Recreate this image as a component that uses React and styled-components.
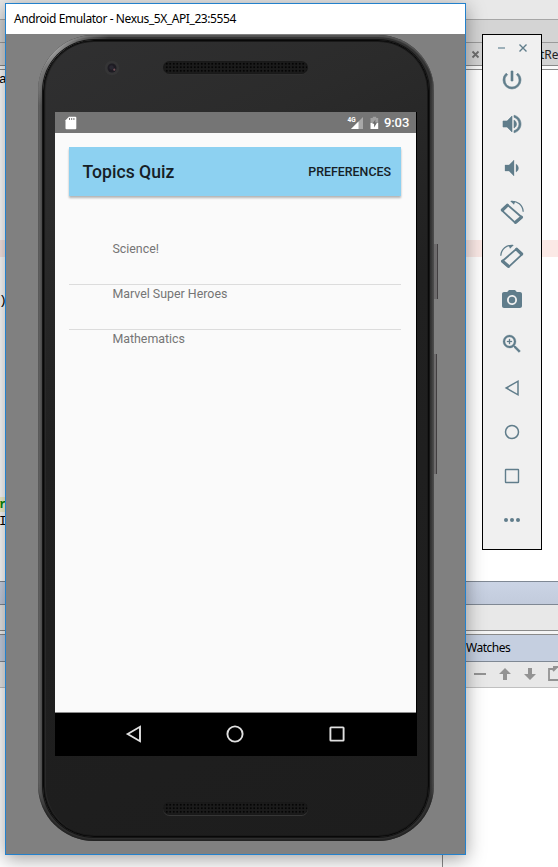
import React from "react";
import styled, { createGlobalStyle, css } from "styled-components";
import { MdPowerSettingsNew, MdVolumeUp, MdVolumeDown, MdCameraAlt, MdZoomIn } from "react-icons/md";

const Global = createGlobalStyle`
  *, *::before, *::after { box-sizing: border-box; }
  html, body { margin: 0; padding: 0; overflow: hidden; }
`;

const ui = css`
  font-family: "Noto Sans", "Open Sans", sans-serif;
  font-size: 12px;
  white-space: nowrap;
`;

const Desktop = styled.main`
  position: relative;
  width: 558px;
  height: 867px;
  overflow: hidden;
  background: #fff;
`;

/* ---------- IDE behind the emulator ---------- */
const Ide = styled.div`
  display: flex;
  flex-direction: column;
  height: 100%;
`;
const Strip = styled.div`
  ${ui}
  flex: none;
  display: flex;
  align-items: center;
  height: ${(p) => p.$h}px;
  background: ${(p) => p.$bg};
  border-bottom: 1px solid ${(p) => p.$line || "#8a8a8a"};
`;
const TabClose = styled.svg`
  flex: none;
  width: 9px;
  height: 9px;
  margin-left: 471px;
  margin-top: 1px;
`;
const TabName = styled.span`
  flex: none;
  margin-left: 60px;
  color: #222;
`;
const Editor = styled.div`
  flex: none;
  display: flex;
  flex-direction: column;
  height: 512px;
  padding-top: 1px;
  border-bottom: 1px solid #7f8894;
  font: 13px/17px "Liberation Mono", monospace;
`;
const CodeLine = styled.div`
  flex: none;
  height: 17px;
  margin-top: ${(p) => p.$gap || 0}px;
  text-indent: -1px;
  background: ${(p) => (p.$breakpoint ? "#fbe9e6" : "transparent")};
  color: ${(p) => p.$color || "#000"};
`;
const Marked = styled.span`
  background: #f8f6d0;
  font-weight: bold;
`;
const WatchTitle = styled.span`
  flex: none;
  margin-left: 466px;
  margin-top: -2px;
  color: #000;
  letter-spacing: -0.5px;
`;
const WatchTools = styled.svg`
  flex: none;
  width: 84px;
  height: 24px;
  margin-left: 474px;
  margin-top: -1px;
`;
const WatchBody = styled.div`
  flex: 1;
  width: 443px;
  border-right: 1px solid #8a8a8a;
`;

/* ---------- Emulator window ---------- */
const EmulatorWindow = styled.section`
  position: absolute;
  left: 5px;
  top: 3px;
  width: 461px;
  height: 852px;
  display: flex;
  flex-direction: column;
  border: 1px solid #2381cc;
  background: #808080;
  box-shadow: 0 4px 18px rgba(0, 0, 0, 0.38);
`;
const TitleBar = styled.header`
  ${ui}
  flex: none;
  height: 30px;
  padding-left: 8px;
  line-height: 30px;
  background: #fff;
  color: #000;
  letter-spacing: -0.42px;
`;
const Stage = styled.div`
  flex: 1;
  padding: 1px 0 0 32px;
`;
const Phone = styled.div`
  position: relative;
  width: 396px;
  height: 806px;
  padding: 5px 5px 4px 5px;
  border-radius: 56px;
  background: linear-gradient(90deg, #777 0, #5a5a5a 2px, #484848 4px, #333 8px, #333 385px, #2e2e2e 392px, #3c3c3c 394px, #636363 396px);
  box-shadow: inset 0 2px 1px #555, inset 0 -2px 2px #222;

  &::before {
    content: "";
    position: absolute;
    inset: 0;
    border-radius: inherit;
    background: radial-gradient(circle at 14px 14px, rgba(190, 190, 190, 0.75), transparent 58px);
  }
`;
const Face = styled.div`
  position: relative;
  height: 100%;
  display: flex;
  flex-direction: column;
  align-items: flex-start;
  padding-left: 11px;
  border: 1px solid #080808;
  border-radius: 51px;
  background: linear-gradient(155deg, #303031 0, #2b2b2b 18%, #202020 42%, #1d1d1d 100%);
  box-shadow: 0 0 0 1px #151515, inset 0 0 0 1px #191919, inset 2px 0 0 #292929;
`;
const Forehead = styled.div`
  flex: none;
  display: flex;
  align-items: flex-start;
  height: 71px;
  padding-top: 20px;
`;
const Camera = styled.svg`
  width: 16px;
  height: 16px;
  margin: -1px 0 0 49px;
`;
const Speaker = styled.div`
  width: 145px;
  height: 13px;
  margin-left: ${(p) => p.$x}px;
  border-radius: 7px;
  background-color: #1b1b1b;
  background-image: radial-gradient(circle, #050505 0.8px, transparent 1.4px);
  background-size: 3.5px 3.5px;
  background-position: 2px 1px;
  box-shadow: 0 1px 0 ${(p) => p.$rim}, inset 0 0 0 1px #191919;
`;
const Chin = styled.div`
  flex: 1;
  padding-top: 46px;
`;
const SideKey = styled.i`
  position: absolute;
  left: ${(p) => p.$x}px;
  top: ${(p) => p.$y}px;
  width: ${(p) => p.$w}px;
  height: ${(p) => p.$h}px;
  background: #6d6b6c;
  border-right: 1px solid #423f41;
`;

/* ---------- Android screen ---------- */
const Screen = styled.div`
  flex: none;
  display: flex;
  flex-direction: column;
  width: 362px;
  height: 644px;
  background: #000;
  font-family: Roboto, sans-serif;
`;
const StatusBar = styled.div`
  display: flex;
  align-items: center;
  width: 361px;
  height: 21px;
  padding: 0 6px 0 10px;
  background: #757575;
  color: #fff;
  font-size: 13px;
  font-weight: 500;
`;
const StatusIcon = styled.svg`
  flex: none;
  width: ${(p) => p.$w}px;
  height: 14px;
  margin-left: ${(p) => p.$gap || 0}px;
`;
const Clock = styled.span`
  margin-left: 5px;
  width: 26px;
  white-space: nowrap;
  letter-spacing: -0.1px;
`;
const Spacer = styled.span`
  flex: 1;
`;
const Activity = styled.div`
  width: 361px;
  height: 580px;
  padding: 14px 15px 0 13.6px;
  background: #fafafa;
  border-bottom: 1px solid #8c8c8c;
`;
const Toolbar = styled.div`
  display: flex;
  align-items: center;
  justify-content: space-between;
  width: 332.8px;
  height: 49px;
  padding: 0 10.4px 0 14px;
  background: #8dd1f1;
  color: #162026;
  box-shadow: 0 1.5px 2px rgba(0, 0, 0, 0.28);
`;
const AppTitle = styled.h1`
  margin: 1px 0 0;
  font-size: 17.6px;
  font-weight: 500;
`;
const MenuAction = styled.span`
  font-size: 12.4px;
  font-weight: 500;
`;
const Topics = styled.ul`
  width: 332.5px;
  margin: 44px 0 0;
  padding: 0;
  list-style: none;
`;
const Topic = styled.li`
  height: 45px;
  padding-left: 43.8px;
  border-bottom: 1px solid ${(p) => (p.$last ? "transparent" : "#dcdcdc")};
  color: #757575;
  font-size: 12.4px;
  line-height: 18px;
`;
const NavBar = styled.nav`
  display: flex;
  align-items: center;
  justify-content: space-between;
  height: 43px;
  padding: 0 70px 2px 68px;
`;
const NavIcon = styled.svg`
  width: 20px;
  height: 20px;
  fill: none;
  stroke: #e0e0e0;
  stroke-width: 1.9;
`;

/* ---------- Floating tool panel ---------- */
const ToolPanel = styled.aside`
  position: absolute;
  left: 482px;
  top: 34px;
  width: 60px;
  height: 516px;
  display: flex;
  flex-direction: column;
  border: 1px solid #000;
  background: #f0f0f0;
  color: #607d8b;
`;
const PanelCaption = styled.svg`
  flex: none;
  width: 58px;
  height: 23px;
  fill: none;
`;
const ToolButton = styled.div`
  flex: none;
  display: grid;
  place-items: center;
  height: 44px;
  & > svg {
    width: 24px;
    height: 24px;
  }
`;
const LineIcon = styled.svg`
  fill: none;
  stroke: currentColor;
  stroke-width: 1.7;
`;
const Heavy = styled.span`
  display: flex;
  font-size: 24px;
  & > svg {
    stroke: none;
  }
  & path:not([fill="none"]) {
    stroke: currentColor;
    stroke-width: ${(p) => p.$weight};
  }
`;

const Rotate = ({ mirrored }) => (
  <LineIcon viewBox="0 0 24 24">
    <g transform={mirrored ? "translate(24 0) scale(-1 1)" : undefined}>
      <path d="M1.9 10.4 L7.6 4.9 L21.8 17.2 L15.3 22.9 Z" strokeWidth="1.8" strokeLinejoin="round" />
      <path d="M2.4 10 L7.3 5.3 M15.6 22.3 L21.4 17.3" strokeWidth="3.2" strokeLinecap="round" />
      <path d="M11 1.4 C17.5 .8 22.8 5.1 23.2 11.7" strokeWidth="1.3" />
      <path d="M10.2 .9 L15.4 .9 L14 4.8 Z" fill="currentColor" stroke="none" />
    </g>
  </LineIcon>
);

const tools = [
  { id: "power", icon: <Heavy $weight={0.6}><MdPowerSettingsNew /></Heavy> },
  { id: "volume-up", icon: <Heavy $weight={0.6}><MdVolumeUp /></Heavy> },
  { id: "volume-down", icon: <Heavy $weight={0.3}><MdVolumeDown /></Heavy> },
  { id: "rotate-left", icon: <Rotate /> },
  { id: "rotate-right", icon: <Rotate mirrored /> },
  { id: "camera", icon: <MdCameraAlt /> },
  { id: "zoom", icon: <Heavy $weight={0.3}><MdZoomIn /></Heavy> },
  { id: "back", icon: <LineIcon viewBox="0 0 24 24"><path d="M6.2 12 L18 5.2 V18.8 Z" strokeWidth="1.5" /></LineIcon> },
  { id: "home", icon: <LineIcon viewBox="0 0 24 24"><circle cx="12" cy="12" r="6.5" strokeWidth="1.5" /></LineIcon> },
  { id: "overview", icon: <LineIcon viewBox="0 0 24 24"><rect x="5.5" y="5.5" width="13" height="13" rx=".5" strokeWidth="1.4" /></LineIcon> },
  {
    id: "more",
    icon: (
      <svg viewBox="0 0 24 24" fill="currentColor">
        <circle cx="6" cy="12" r="2" /><circle cx="12" cy="12" r="2" /><circle cx="18" cy="12" r="2" />
      </svg>
    ),
  },
];

const topics = ["Science!", "Marvel Super Heroes", "Mathematics"];

export default function App() {
  return (
    <Desktop>
      <Global />
      <Ide>
        <Strip $h={20} $bg="#e8e8e8" $line="#a6a6a6" />
        <Strip $h={23} $bg="#d4d4d4" $line="#9a9a9a" />
        <Strip $h={23} $bg="#d3d3d3">
          <TabClose viewBox="0 0 9 9"><path d="M1.5 1.5 L7.5 7.5 M7.5 1.5 L1.5 7.5" stroke="#6e6e6e" strokeWidth="1.8" /></TabClose>
          <TabName>tRe</TabName>
        </Strip>
        <Strip $h={4} $bg="#fafafa" />
        <Editor>
          <CodeLine>a</CodeLine>
          <CodeLine $gap={152} $breakpoint />
          <CodeLine $gap={35}>)</CodeLine>
          <CodeLine $gap={187} $color="#0a8a0a"><Marked>r</Marked></CodeLine>
          <CodeLine>I</CodeLine>
        </Editor>
        <Strip $h={23} $bg="linear-gradient(#cbd4e5, #c2cbdc)" $line="#7f8894" />
        <Strip $h={26} $bg="#e8e8e8" />
        <Strip $h={4} $bg="#f4f4f4" />
        <Strip $h={27} $bg="#c5cfe0" $line="#7f8894"><WatchTitle>Watches</WatchTitle></Strip>
        <Strip $h={26} $bg="#e8e8e8" $line="#c0c0c0">
          <WatchTools viewBox="0 0 84 24" fill="#939393">
            <path d="M0 11h12v2H0z" />
            <path d="M31 6l6 6h-4v6h-4v-6h-4z" />
            <path d="M56 18l6-6h-4V6h-4v6h-4z" />
            <path d="M81 7h-6v11h9M79 5h5M79 9l4-4" fill="none" stroke="#939393" strokeWidth="1.8" />
          </WatchTools>
        </Strip>
        <WatchBody />
      </Ide>

      <EmulatorWindow>
        <TitleBar>Android Emulator - Nexus_5X_API_23:5554</TitleBar>
        <Stage>
          <Phone>
            <Face>
              <Forehead>
                <Camera viewBox="0 0 16 16">
                  <circle cx="8" cy="8" r="7.3" fill="#353536" />
                  <circle cx="8" cy="8" r="4.5" fill="#1d1b22" />
                  <circle cx="7.5" cy="7.5" r="2.2" fill="#292731" />
                  <circle cx="10.3" cy="9.7" r="1.1" fill="#75525a" />
                </Camera>
                <Speaker $x={43} $rim="#303030" />
              </Forehead>
              <Screen>
                <StatusBar>
                  <StatusIcon $w={12} viewBox="0 0 12 14">
                    <path d="M4 .7h6.3a1 1 0 0 1 1 1v10.6a1 1 0 0 1-1 1H1.5a1 1 0 0 1-1-1V4.2z" fill="#fff" />
                    <path d="M4.5 2v2M6.7 2v2M8.9 2v2" stroke="#777" strokeWidth="1" />
                  </StatusIcon>
                  <Spacer />
                  <StatusIcon $w={17} viewBox="0 0 17 14">
                    <path d="M16 1v12H4z" fill="#a8a8a8" />
                    <path d="M11.5 5.5V13H4z" fill="#fff" />
                    <text x="0.5" y="6.3" fill="#fff" fontFamily="Roboto" fontWeight="700" fontSize="6.5">4G</text>
                  </StatusIcon>
                  <StatusIcon $w={9} $gap={6} viewBox="0 0 9 14">
                    <path d="M2.8.8h3.4V2h2v5H.5V2h2.3z" fill="#a0a0a0" />
                    <path d="M.5 7h7.7v6H.5z" fill="#fff" />
                    <path d="M5.5 3.4L2.3 7.8h1.8v3.6l3-4.8H5.2z" fill="#6c6c6c" />
                  </StatusIcon>
                  <Clock>9:03</Clock>
                </StatusBar>
                <Activity>
                  <Toolbar>
                    <AppTitle>Topics Quiz</AppTitle>
                    <MenuAction>PREFERENCES</MenuAction>
                  </Toolbar>
                  <Topics>
                    {topics.map((t, i) => (
                      <Topic key={t} $last={i === topics.length - 1}>{t}</Topic>
                    ))}
                  </Topics>
                </Activity>
                <NavBar>
                  <NavIcon viewBox="0 0 20 20"><path d="M4.7 10 L17 2.8 V17.2 Z" /></NavIcon>
                  <NavIcon viewBox="0 0 20 20"><circle cx="10" cy="10" r="7.6" /></NavIcon>
                  <NavIcon viewBox="0 0 20 20"><rect x="3.4" y="3.4" width="13.2" height="13.2" rx=".6" /></NavIcon>
                </NavBar>
              </Screen>
              <Chin><Speaker $x={108} $rim="#363636" /></Chin>
            </Face>
            <SideKey $x={396} $y={209} $w={4} $h={55} />
            <SideKey $x={396} $y={319} $w={3} $h={120} />
          </Phone>
        </Stage>
      </EmulatorWindow>

      <ToolPanel>
        <PanelCaption viewBox="0 0 58 23">
          <path d="M15 13h7" stroke="#9db0b9" strokeWidth="2" />
          <path d="M36.5 9.5l7 7M43.5 9.5l-7 7" stroke="#607d8b" strokeWidth="1.4" />
        </PanelCaption>
        {tools.map((t) => (
          <ToolButton key={t.id}>{t.icon}</ToolButton>
        ))}
      </ToolPanel>
    </Desktop>
  );
}
